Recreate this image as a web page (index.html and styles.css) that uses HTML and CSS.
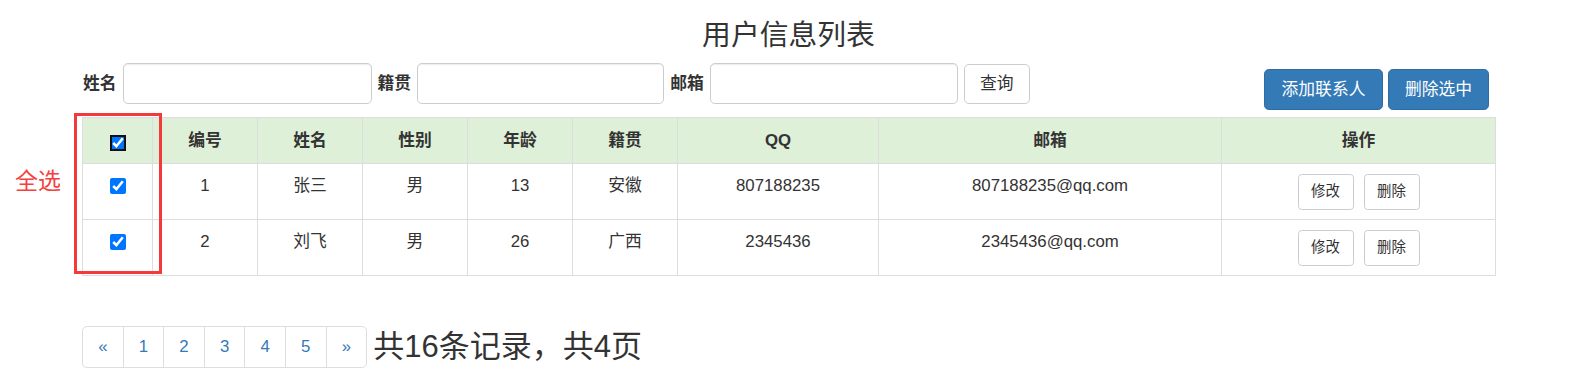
FILE: index.html
```html
<!DOCTYPE html>
<html lang="zh-CN">
<head>
<meta charset="utf-8">
<title>用户信息列表</title>
<link rel="stylesheet" href="styles.css">
</head>
<body>
<div class="page">
  <h3 class="title">用户信息列表</h3>
  <div class="toolbar">
    <form class="search">
      <div class="field">
        <label class="field-label">姓名</label>
        <input class="field-input w249" type="text">
      </div>
      <div class="field">
        <label class="field-label">籍贯</label>
        <input class="field-input w247" type="text">
      </div>
      <div class="field">
        <label class="field-label">邮箱</label>
        <input class="field-input w248" type="text">
      </div>
      <button class="btn btn-default" type="button">查询</button>
    </form>
    <div class="actions">
      <button class="btn btn-primary btn-add" type="button">添加联系人</button>
      <button class="btn btn-primary btn-del" type="button">删除选中</button>
    </div>
  </div>

  <table class="users">
    <colgroup>
      <col class="c-check"><col class="c-id"><col class="c-name"><col class="c-sex"><col class="c-age"><col class="c-addr"><col class="c-qq"><col class="c-mail"><col class="c-op">
    </colgroup>
    <thead>
      <tr>
        <th><input class="check check-focus" type="checkbox" checked></th>
        <th>编号</th><th>姓名</th><th>性别</th><th>年龄</th><th>籍贯</th><th>QQ</th><th>邮箱</th><th>操作</th>
      </tr>
    </thead>
    <tbody>
      <tr>
        <td><input class="check" type="checkbox" checked></td>
        <td>1</td><td>张三</td><td>男</td><td>13</td><td>安徽</td><td>807188235</td><td>807188235@qq.com</td>
        <td><div class="ops"><button class="btn btn-sm" type="button">修改</button><button class="btn btn-sm" type="button">删除</button></div></td>
      </tr>
      <tr>
        <td><input class="check" type="checkbox" checked></td>
        <td>2</td><td>刘飞</td><td>男</td><td>26</td><td>广西</td><td>2345436</td><td>2345436@qq.com</td>
        <td><div class="ops"><button class="btn btn-sm" type="button">修改</button><button class="btn btn-sm" type="button">删除</button></div></td>
      </tr>
    </tbody>
  </table>

  <div class="footer">
    <ul class="pagination">
      <li><a href="#">«</a></li>
      <li><a href="#">1</a></li>
      <li><a href="#">2</a></li>
      <li><a href="#">3</a></li>
      <li><a href="#">4</a></li>
      <li><a href="#">5</a></li>
      <li><a href="#">»</a></li>
    </ul>
    <span class="total">共16条记录，共4页</span>
  </div>
</div>

<div class="note-box"></div>
<div class="note-text">全选</div>
</body>
</html>
```

FILE: styles.css
```css
* { box-sizing: border-box; }

html, body {
  margin: 0;
  padding: 0;
  background: #fff;
}

body {
  font-family: "Liberation Sans", "Noto Sans CJK SC", sans-serif;
  font-size: 16.8px;
  line-height: 24px;
  color: #333;
  position: relative;
  width: 1573px;
  height: 390px;
  overflow: hidden;
}

.page {
  width: 1413px;
  margin-left: 82px;
}

.title {
  margin: 19px 0 0;
  font-size: 28.8px;
  line-height: 32px;
  font-weight: 400;
  text-align: center;
}

.toolbar {
  display: flex;
  justify-content: space-between;
  align-items: flex-start;
  margin-top: 12px;
}

.search {
  display: flex;
  align-items: center;
  gap: 6px;
  margin: 0;
  padding-left: 1px;
}

.field {
  display: flex;
  align-items: center;
  gap: 6px;
}

.field-label {
  font-weight: bold;
}

.field-input {
  height: 41px;
  border: 1px solid #ccc;
  border-radius: 4.8px;
  box-shadow: inset 0 1px 1px rgba(0,0,0,.075);
  padding: 7px 14px;
  font: inherit;
  background: #fff;
}
.w249 { width: 249px; }
.w247 { width: 247px; }
.w248 { width: 248px; }

.btn {
  font: inherit;
  line-height: 24px;
  padding: 0;
  border: 1px solid #ccc;
  border-radius: 4.8px;
  background: #fff;
  color: #333;
  cursor: pointer;
  white-space: nowrap;
  text-align: center;
}

.btn-default {
  height: 40px;
  width: 66px;
}

.actions {
  display: flex;
  gap: 5px;
  margin-top: 6px;
  margin-right: 6px;
}

.btn-primary {
  background: #337ab7;
  border-color: #2e6da4;
  color: #fff;
  height: 41px;
}
.btn-add { width: 119px; }
.btn-del { width: 101px; }

.users {
  width: 1413px;
  margin-top: 7px;
  border-collapse: collapse;
  table-layout: fixed;
  border: 1px solid #ddd;
}

.c-check { width: 70px; }
.c-id, .c-name, .c-sex, .c-age, .c-addr { width: 105px; }
.c-qq { width: 201px; }
.c-mail { width: 343px; }
.c-op { width: 274px; }

.users th, .users td {
  border: 1px solid #ddd;
  text-align: center;
  padding: 9.6px 8px;
  line-height: 24px;
}

.users th {
  background: #dff0d8;
  font-weight: bold;
  height: 46px;
  vertical-align: middle;
}

.users td {
  height: 56px;
  vertical-align: top;
}

.check {
  display: block;
  width: 16px;
  height: 16px;
  margin: 4px auto 0;
  accent-color: #0075ff;
}

.check-focus {
  outline: 2px solid #111;
  outline-offset: -2px;
  border-radius: 3px;
}

.ops {
  display: flex;
  justify-content: center;
  gap: 10px;
}

.btn-sm {
  font-size: 14.4px;
  line-height: 21.6px;
  height: 36px;
  width: 56px;
  border-radius: 3.6px;
}

.footer {
  display: flex;
  align-items: center;
  gap: 6px;
  margin-top: 50px;
}

.pagination {
  display: flex;
  list-style: none;
  margin: 0;
  padding: 0;
}

.pagination li a {
  display: block;
  height: 42px;
  width: 41.6px;
  margin-left: -1px;
  line-height: 40px;
  text-align: center;
  border: 1px solid #ddd;
  color: #337ab7;
  text-decoration: none;
  background: #fff;
}

.pagination li:first-child a {
  margin-left: 0;
  border-radius: 4.8px 0 0 4.8px;
}

.pagination li:last-child a {
  border-radius: 0 4.8px 4.8px 0;
}

.total {
  font-size: 31px;
  line-height: 40px;
}

.note-box {
  position: absolute;
  left: 74px;
  top: 113px;
  width: 88px;
  height: 161px;
  border: 3px solid #f5393a;
}

.note-text {
  position: absolute;
  left: 15px;
  top: 166px;
  font-size: 23px;
  line-height: 30px;
  color: #f54040;
}
```
